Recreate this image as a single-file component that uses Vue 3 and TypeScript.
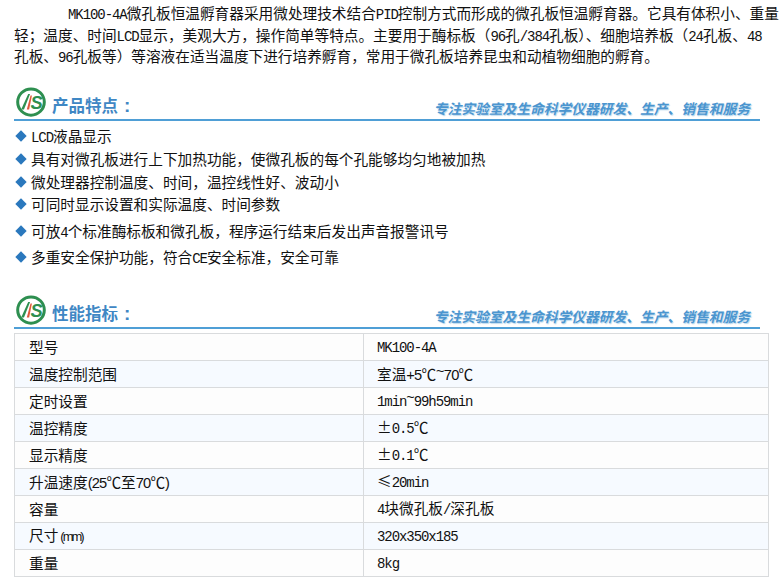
<script setup lang="ts">
interface Seg { t: string; cls: string }
const split = (s: string, mode = 'mono'): Seg[] =>
  (s.match(/~|[\x20-\x7d]+|[^\x20-\x7e]+/g) || []).map((t) => ({
    t,
    cls: t === '~' ? `${mode} tilde` : /^[\x20-\x7d]/.test(t) ? mode : '',
  }))

const intro = [
  'MK100-4A微孔板恒温孵育器采用微处理技术结合PID控制方式而形成的微孔板恒温孵育器。它具有体积小、重量',
  '轻\uFF1B温度、时间LCD显示\uFF0C美观大方\uFF0C操作简单等特点。主要用于酶标板\uFF0896孔/384孔板\uFF09、细胞培养板\uFF0824孔板、48',
  '孔板、96孔板等\uFF09等溶液在适当温度下进行培养孵育\uFF0C常用于微孔板培养昆虫和动植物细胞的孵育。',
].map((l) => split(l))

const features = [
  { text: 'LCD液晶显示', h: 23 },
  { text: '具有对微孔板进行上下加热功能\uFF0C使微孔板的每个孔能够均匀地被加热', h: 23 },
  { text: '微处理器控制温度、时间\uFF0C温控线性好、波动小', h: 22 },
  { text: '可同时显示设置和实际温度、时间参数', h: 27 },
  { text: '可放4个标准酶标板和微孔板\uFF0C程序运行结束后发出声音报警讯号', h: 26 },
  { text: '多重安全保护功能\uFF0C符合CE安全标准\uFF0C安全可靠', h: 23 },
].map((f) => ({ segs: split(f.text), h: f.h + 'px' }))

const specs: Seg[][][] = [
  [split('型号'), split('MK100-4A')],
  [split('温度控制范围'), split('室温+5℃~70℃', 'sans')],
  [split('定时设置'), split('1min~99h59min')],
  [split('温控精度'), split('±0.5℃')],
  [split('显示精度'), split('±0.1℃')],
  [split('升温速度(25℃至70℃)', 'sans'), split('≤20min')],
  [split('容量'), split('4块微孔板/深孔板')],
  [split('尺寸(mm)', 'tight'), split('320x350x185')],
  [split('重量'), split('8kg')],
]
const heads = ['产品特点', '性能指标']
</script>

<template>
  <div class="page">
    <div class="intro">
      <p v-for="(line, i) in intro" :key="i" class="line" :class="{ first: i === 0 }">
        <span v-for="(s, j) in line" :key="j" :class="s.cls">{{ s.t }}</span>
      </p>
    </div>

    <div class="head">
      <svg class="logo" viewBox="0 0 32 32" width="30" height="30" aria-hidden="true">
        <ellipse cx="16" cy="16" rx="14.2" ry="14" fill="#fff" stroke="#2e8f50" stroke-width="3.2" />
        <path d="M5.5 24 L13 7.5 L15 7.5 L8.5 24 Z" fill="#2e8f50" />
        <path d="M11.5 24 L15.5 9 L17 9 L14 24 Z" fill="#e2573c" />
        <text x="15.5" y="23.5" class="logo-s">S</text>
      </svg>
      <span class="title">{{ heads[0] }}<span class="colon">:</span></span>
      <span class="slogan">专注实验室及生命科学仪器研发、生产、销售和服务</span>
    </div>

    <ul class="features">
      <li v-for="(f, i) in features" :key="i" :style="{ height: f.h }">
        <i class="dot"></i>
        <span><span v-for="(s, j) in f.segs" :key="j" :class="s.cls">{{ s.t }}</span></span>
      </li>
    </ul>

    <div class="head">
      <svg class="logo" viewBox="0 0 32 32" width="30" height="30" aria-hidden="true">
        <ellipse cx="16" cy="16" rx="14.2" ry="14" fill="#fff" stroke="#2e8f50" stroke-width="3.2" />
        <path d="M5.5 24 L13 7.5 L15 7.5 L8.5 24 Z" fill="#2e8f50" />
        <path d="M11.5 24 L15.5 9 L17 9 L14 24 Z" fill="#e2573c" />
        <text x="15.5" y="23.5" class="logo-s">S</text>
      </svg>
      <span class="title">{{ heads[1] }}<span class="colon">:</span></span>
      <span class="slogan">专注实验室及生命科学仪器研发、生产、销售和服务</span>
    </div>

    <table class="specs">
      <tbody>
        <tr v-for="(row, i) in specs" :key="i">
          <td v-for="(cell, k) in row" :key="k" :class="k === 0 ? 'c0' : 'c1'">
            <span v-for="(s, j) in cell" :key="j" :class="s.cls">{{ s.t }}</span>
          </td>
        </tr>
      </tbody>
    </table>
  </div>
</template>

<style>
html, body { margin: 0; background: #fff; }
</style>

<style scoped>
.page {
  width: 782px;
  height: 581px;
  overflow: hidden;
  box-sizing: border-box;
  padding: 2px 0 0 14px;
  font-family: "Noto Sans CJK SC", "Liberation Sans", sans-serif;
  font-size: 14.67px;
  color: #111;
}
.mono { font-family: "Liberation Mono", monospace; font-size: 14px; letter-spacing: -1.07px; }
.sans { font-family: "Liberation Sans", sans-serif; font-size: 14.67px; letter-spacing: -0.82px; }
.tight { font-family: "Liberation Sans", sans-serif; font-size: 13px; letter-spacing: -2px; margin-left: 2px; }
.tilde { vertical-align: 4px; line-height: 0; }
.intro { height: 81px; }
.line { margin: 0; height: 21.5px; line-height: 21.5px; white-space: nowrap; }
.first { padding-left: 54px; }
.head {
  width: 746px;
  height: 38px;
  box-sizing: border-box;
  border-bottom: 2px solid #4f9fd6;
  display: flex;
  align-items: flex-end;
}
.logo { margin: 0 6px 2px 2px; flex: none; }
.logo-s { font: italic 700 19.5px "Liberation Sans", sans-serif; fill: #2e8f50; }
.title {
  font-size: 16.5px;
  font-weight: 700;
  color: #3f87c4;
  line-height: 24px;
  margin-bottom: 1px;
  white-space: nowrap;
}
.colon { margin-left: 6px; font-family: "Liberation Sans", sans-serif; font-size: 19px; }
.slogan {
  margin-left: auto;
  margin-right: 10px;
  font-size: 13.75px;
  font-weight: 700;
  font-style: italic;
  line-height: 20px;
  margin-bottom: 1px;
  white-space: nowrap;
  color: #4b95cf;
  text-shadow: 1px 1px 1px #b5d6ec;
}
.features { list-style: none; margin: 5px 0 0; padding: 0; height: 165px; }
.features li { display: flex; align-items: flex-start; gap: 5px; white-space: nowrap; line-height: 20px; padding-left: 2px; }
.dot {
  width: 8px;
  height: 8px;
  margin: 6px 1px 0;
  background: #2a78bd;
  transform: rotate(45deg);
  flex: none;
}
.specs {
  border-collapse: collapse;
  width: 755px;
  table-layout: fixed;
  margin-top: 4px;
}
.specs td {
  border: 1px solid #d9dbdd;
  height: 26px;
  padding: 0 0 0 14px;
  box-sizing: border-box;
  line-height: 20px;
  white-space: nowrap;
  background: #fdfdfd;
}
.specs tr { height: 27px; }
.specs tr:nth-child(even) td { background: #f6faff; }
.specs .c0 { width: 349px; }
.specs .c1 { padding-left: 13px; }
</style>
